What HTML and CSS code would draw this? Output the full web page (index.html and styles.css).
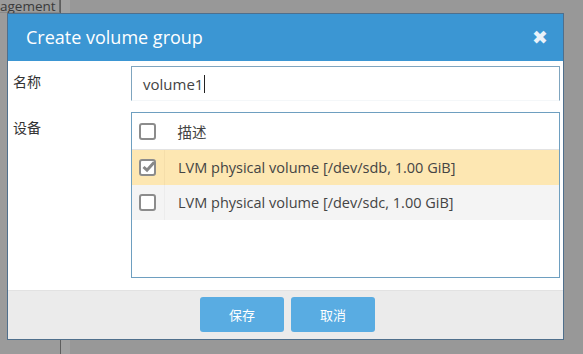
FILE: index.html
```html
<!DOCTYPE html>
<html lang="zh">
<head>
    <meta charset="UTF-8">
    <title>Create volume group</title>
    <link rel="stylesheet" href="styles.css">
</head>
<body>
    <div class="page">
        <div class="sidebar">
            <div class="tab">agement</div>
        </div>
        <div class="strip"></div>
    </div>

    <div class="dialog">
        <div class="dialog-header">
            <span class="dialog-title">Create volume group</span>
            <span class="dialog-close">&#10006;</span>
        </div>
        <div class="dialog-body">
            <div class="field">
                <label class="field-label">名称</label>
                <div class="name-input">volume1<span class="caret"></span></div>
            </div>
            <div class="field">
                <label class="field-label">设备</label>
                <div class="device-box">
                    <table class="device-table">
                        <thead>
                            <tr>
                                <th class="check-col"><span class="checkbox"></span></th>
                                <th>描述</th>
                            </tr>
                        </thead>
                        <tbody>
                            <tr class="selected">
                                <td class="check-col">
                                    <span class="checkbox checked">
                                        <svg viewBox="0 0 16 16" width="16" height="16"><path d="M3.5 8 L7 11.2 L14.2 3.2" fill="none" stroke="#888" stroke-width="3"/></svg>
                                    </span>
                                </td>
                                <td>LVM physical volume [/dev/sdb, 1.00 GiB]</td>
                            </tr>
                            <tr class="plain">
                                <td class="check-col"><span class="checkbox"></span></td>
                                <td>LVM physical volume [/dev/sdc, 1.00 GiB]</td>
                            </tr>
                        </tbody>
                    </table>
                </div>
            </div>
        </div>
        <div class="dialog-footer">
            <button class="btn">保存</button>
            <button class="btn">取消</button>
        </div>
    </div>
</body>
</html>
```

FILE: styles.css
```css
body {
    margin: 0;
    width: 583px;
    height: 354px;
    overflow: hidden;
    background-color: #989898;
    font-family: "Open Sans", "Noto Sans CJK SC", sans-serif;
    color: #444;
    position: relative;
}

.page {
    display: flex;
    height: 354px;
}

.sidebar {
    width: 60px;
    border-right: 1px solid #5e5e5e;
    background-color: #9b9b9b;
}

.tab {
    height: 14px;
    line-height: 16px;
    font-size: 13.5px;
    color: #3a3a3a;
    white-space: nowrap;
    border-right: 1px solid #6a6a6a;
    border-bottom: 1px solid #8a8a8a;
    margin-top: -2px;
}

.strip {
    width: 9px;
    background-color: #a2a2a2;
}

/* modal */
.dialog {
    position: absolute;
    left: 7px;
    top: 13px;
    width: 555px;
    border: 1px solid #4f6f8c;
    background-color: #fff;
    display: flex;
    flex-direction: column;
}

.dialog-header {
    height: 47px;
    background-color: #3b96d3;
    display: flex;
    align-items: center;
    justify-content: space-between;
    padding: 0 15px 0 18px;
}

.dialog-title {
    color: #fff;
    font-size: 18px;
    margin-top: -2px;
}

.dialog-close {
    color: #e9f2fa;
    font-size: 19px;
    font-family: "DejaVu Sans", sans-serif;
    font-weight: bold;
    margin-top: -2px;
}

.dialog-body {
    padding: 5px 3px 12px 5px;
    display: flex;
    flex-direction: column;
    gap: 11px;
}

.field {
    display: flex;
}

.field-label {
    width: 118px;
    padding: 6px 0 0 0;
    line-height: 20px;
    font-size: 14px;
    color: #333;
}

.name-input {
    flex: 1;
    height: 33px;
    border: 1px solid #7fa5bf;
    border-bottom-color: #f4f7f9;
    padding-left: 11px;
    font-size: 15px;
    color: #444;
    display: flex;
    align-items: center;
}

.caret {
    display: inline-block;
    width: 1px;
    height: 18px;
    background-color: #222;
    margin-left: 1px;
}

.device-box {
    flex: 1;
    height: 164px;
    border: 1px solid #6e9fc0;
}

.device-table {
    width: 100%;
    border-collapse: collapse;
    font-size: 14.5px;
}

.device-table th,
.device-table td {
    height: 35px;
    padding: 0 0 0 13px;
    text-align: left;
    font-weight: normal;
    color: #444;
}

.device-table thead th {
    border-bottom: 1px solid #e3e3e3;
    height: 36px;
}

.device-table .check-col {
    width: 20px;
    padding-left: 7px;
    padding-right: 5px;
}

.device-table tbody .check-col {
    border-right: 1px solid #ececec;
}

.device-table tr.selected {
    background-color: #fde7b2;
}

.device-table tr.selected .check-col {
    border-right-color: #f5deaa;
}

.device-table tr.plain {
    background-color: #f4f4f4;
}

.checkbox {
    display: block;
    width: 13px;
    height: 13px;
    border: 2px solid #8c8c8c;
    border-radius: 3px;
    background-color: #fff;
    position: relative;
}

.checkbox.checked svg {
    position: absolute;
    left: -1px;
    top: -2px;
}

.dialog-footer {
    height: 49px;
    background-color: #ebebeb;
    border-top: 1px solid #e2e2e2;
    display: flex;
    justify-content: center;
    align-items: flex-start;
    gap: 7px;
    padding-top: 6px;
    padding-left: 4px;
    box-sizing: border-box;
}

.btn {
    width: 84px;
    height: 35px;
    border: none;
    border-radius: 3px;
    background-color: #59ace2;
    color: #fff;
    font-size: 13px;
    font-family: "Noto Sans CJK SC", sans-serif;
    cursor: pointer;
}
```
